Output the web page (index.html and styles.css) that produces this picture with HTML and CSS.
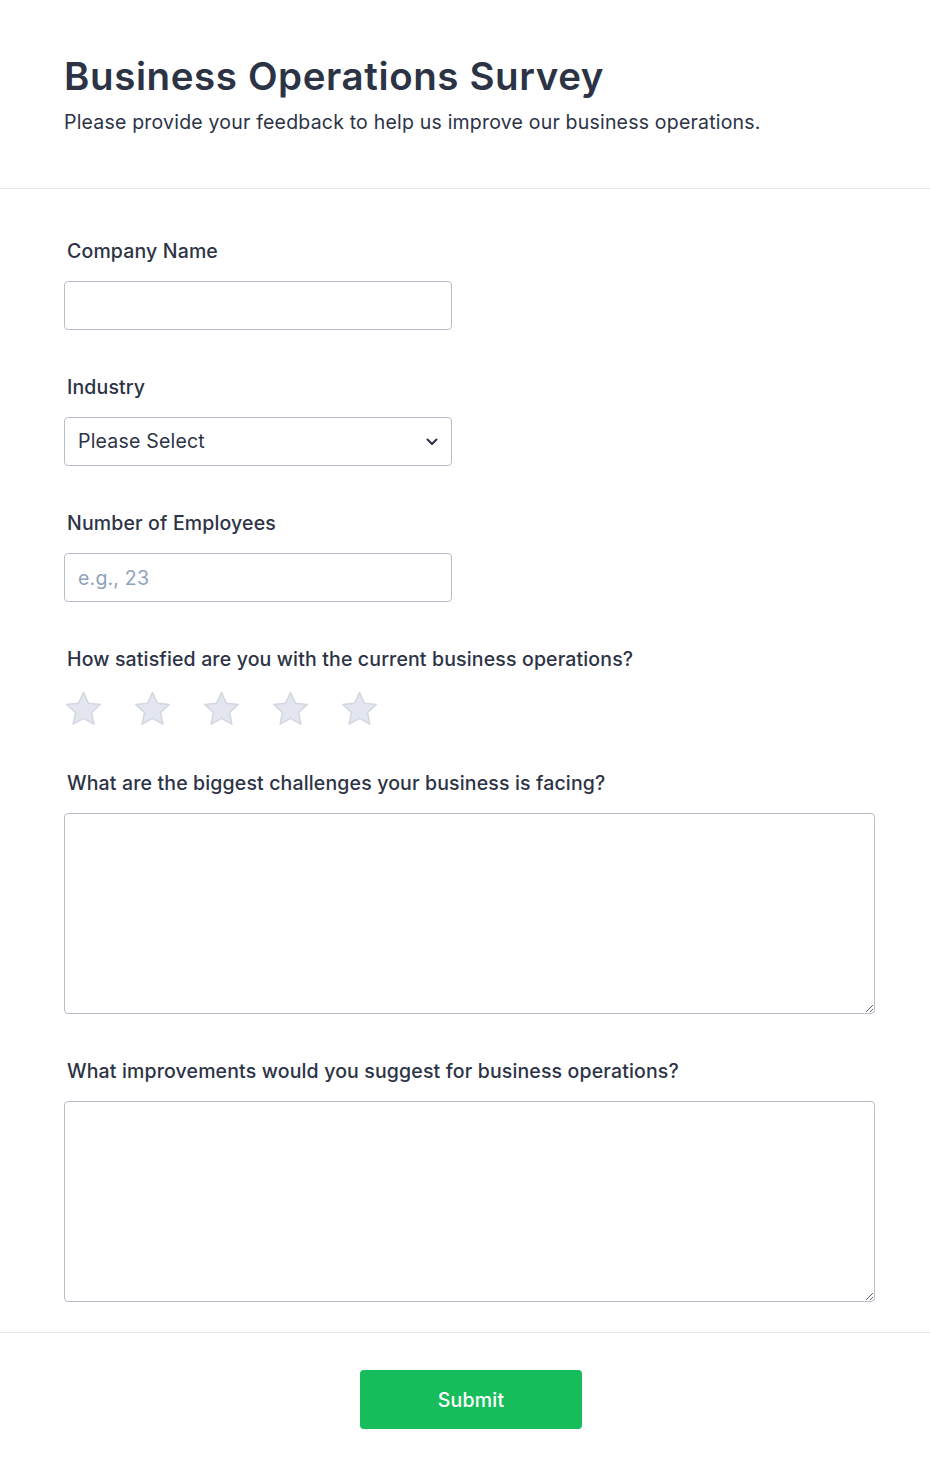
FILE: index.html
```html
<!DOCTYPE html>
<html lang="en">
<head>
<meta charset="utf-8">
<title>Business Operations Survey</title>
<link rel="stylesheet" href="styles.css">
</head>
<body>
<header class="header">
  <h1 class="title">Business Operations Survey</h1>
  <p class="subtitle">Please provide your feedback to help us improve our business operations.</p>
</header>
<form class="form">
  <div class="field">
    <label class="label">Company Name</label>
    <input class="input" type="text">
  </div>
  <div class="field">
    <label class="label">Industry</label>
    <div class="select">
      <span>Please Select</span>
      <svg class="chevron" width="12" height="8" viewBox="0 0 12 8"><path d="M1.5 1.5 6 6 10.5 1.5" fill="none" stroke="#2c3345" stroke-width="2" stroke-linecap="round" stroke-linejoin="round"/></svg>
    </div>
  </div>
  <div class="field">
    <label class="label">Number of Employees</label>
    <div class="input placeholder">e.g., 23</div>
  </div>
  <div class="field">
    <label class="label">How satisfied are you with the current business operations?</label>
    <div class="stars">
      <svg class="star" viewBox="0 0 40 40"><path d="M20 2.5 25.1 13.6 37.2 14.9 28.2 23.1 30.7 35 20 29 9.3 35 11.8 23.1 2.8 14.9 14.9 13.6Z"/></svg>
      <svg class="star" viewBox="0 0 40 40"><path d="M20 2.5 25.1 13.6 37.2 14.9 28.2 23.1 30.7 35 20 29 9.3 35 11.8 23.1 2.8 14.9 14.9 13.6Z"/></svg>
      <svg class="star" viewBox="0 0 40 40"><path d="M20 2.5 25.1 13.6 37.2 14.9 28.2 23.1 30.7 35 20 29 9.3 35 11.8 23.1 2.8 14.9 14.9 13.6Z"/></svg>
      <svg class="star" viewBox="0 0 40 40"><path d="M20 2.5 25.1 13.6 37.2 14.9 28.2 23.1 30.7 35 20 29 9.3 35 11.8 23.1 2.8 14.9 14.9 13.6Z"/></svg>
      <svg class="star" viewBox="0 0 40 40"><path d="M20 2.5 25.1 13.6 37.2 14.9 28.2 23.1 30.7 35 20 29 9.3 35 11.8 23.1 2.8 14.9 14.9 13.6Z"/></svg>
    </div>
  </div>
  <div class="field">
    <label class="label">What are the biggest challenges your business is facing?</label>
    <textarea class="textarea"></textarea>
  </div>
  <div class="field">
    <label class="label">What improvements would you suggest for business operations?</label>
    <textarea class="textarea"></textarea>
  </div>
</form>
<footer class="footer">
  <button class="submit" type="button">Submit</button>
</footer>
</body>
</html>
```
FILE: styles.css
```css
* { box-sizing: border-box; }
html, body { margin: 0; padding: 0; background: #fff; }
body {
  font-family: Inter, "Noto Sans", sans-serif;
  color: #2c3345;
}
.header {
  padding: 53px 64px 52px;
  border-bottom: 1px solid #e3e3ee;
}
.title {
  margin: 0;
  font-size: 38.5px;
  line-height: 46px;
  font-weight: 600;
  letter-spacing: 0.6px;
}
.subtitle {
  margin: 10px 0 0;
  font-size: 19.5px;
  line-height: 27px;
  font-weight: 400;
  letter-spacing: 0.2px;
}
.form {
  padding: 49px 55px 30px 64px;
  display: flex;
  flex-direction: column;
  gap: 44px;
}
.field {
  display: flex;
  flex-direction: column;
  align-items: flex-start;
}
.label {
  display: block;
  margin: 0 0 16px 3px;
  font-size: 19.5px;
  line-height: 27px;
  font-weight: 500;
  letter-spacing: 0.15px;
}
.input, .select {
  width: 388px;
  height: 49px;
  border: 1px solid #b8bdc9;
  border-radius: 4px;
  background: #fff;
  font-family: inherit;
  font-size: 19.5px;
  letter-spacing: 0.2px;
  color: #2c3345;
  padding: 0 13px;
  margin: 0;
  outline: none;
}
.select {
  display: flex;
  align-items: center;
  justify-content: space-between;
}
.select span { line-height: 1; }
.placeholder {
  display: flex;
  align-items: center;
  color: #8fa3ba;
}
.stars {
  display: flex;
  gap: 30px;
  margin-top: 1px;
  margin-bottom: -3px;
}
.star {
  width: 39px;
  height: 39px;
  display: block;
}
.star path {
  fill: #e3e6ef;
  stroke: #d1d6e1;
  stroke-width: 1.5;
  stroke-linejoin: round;
}
.textarea {
  width: 811px;
  height: 201px;
  border: 1px solid #b8bdc9;
  border-radius: 4px;
  resize: vertical;
  margin: 0;
  font-family: inherit;
  font-size: 18px;
  outline: none;
  display: block;
}
.footer {
  border-top: 1px solid #e3e3ee;
  padding: 37px 0 50px;
  display: flex;
  justify-content: center;
}
.submit {
  width: 222px;
  height: 59px;
  background: #18bd5b;
  border: none;
  border-radius: 4px;
  color: #fff;
  font-family: inherit;
  font-size: 19.5px;
  font-weight: 500;
  letter-spacing: 0.2px;
  margin-left: 12px;
}
```
